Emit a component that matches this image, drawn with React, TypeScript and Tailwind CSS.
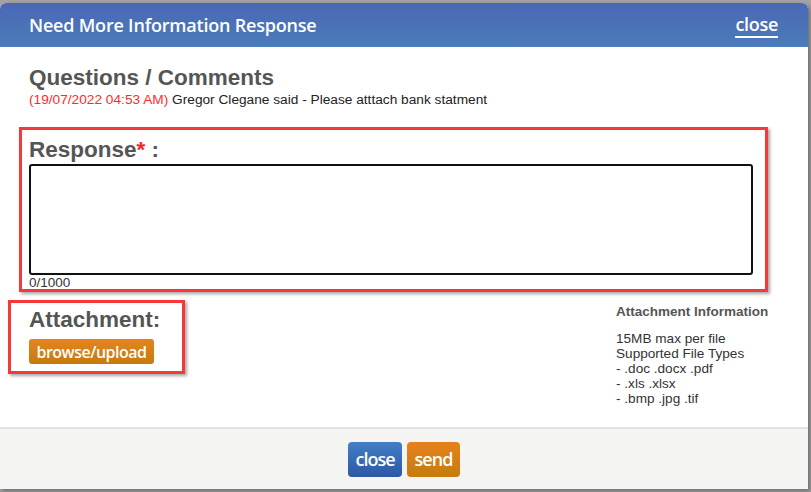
import React from "react";

export default function App() {
  const arial = { fontFamily: '"Liberation Sans", Arial, sans-serif' };
  const humanist = { fontFamily: '"Open Sans", "Noto Sans", sans-serif' };
  return (
    <div className="w-[811px] h-[492px] bg-[#a3a3a3] overflow-hidden pt-[3px]" style={arial}>
      <div className="w-[808px] h-[486px] bg-white rounded-t-[6px] flex flex-col shadow-[2px_2px_4px_rgba(0,0,0,0.35)]">
        {/* Header */}
        <div
          className="h-[44px] shrink-0 rounded-t-[6px] bg-gradient-to-b from-[#4b67b5] to-[#4a7cba] flex items-center justify-between pl-[29px] pr-[30px]"
          style={humanist}
        >
          <div className="text-white text-[18px] font-semibold tracking-[-0.2px] leading-none">
            Need More Information Response
          </div>
          <div className="text-white text-[18px] font-semibold leading-none tracking-[-0.3px] border-b-2 border-white pb-[3px] mt-[2px]">
            close
          </div>
        </div>

        {/* Body */}
        <div className="flex-1 pl-[29px] pt-[18px]">
          <div className="text-[22.5px] font-bold text-[#555] leading-[26px]">Questions / Comments</div>
          <div className="text-[13.7px] leading-[15px] mt-[1px] text-[#222]">
            <span className="text-[#ff2b2b]">(19/07/2022 04:53 AM)</span> Gregor Clegane said - Please atttach bank statment
          </div>

          {/* Response annotated box */}
          <div className="-ml-[10px] mt-[20px] w-[749px] h-[165px] border-[3px] border-[#f53838] shadow-[2px_2px_3px_rgba(0,0,0,0.35)] pl-[7px] pt-[6px]">
            <div className="text-[22.5px] font-bold text-[#555] leading-[27px]">
              Response<span className="text-[#ff1f1f]">*</span> :
            </div>
            <div className="w-[724px] h-[111px] border-2 border-[#111] rounded-[3px] mt-[1px]"></div>
            <div className="text-[13.5px] leading-[14px] text-[#333] mt-[1px]">0/1000</div>
          </div>

          {/* Attachment row */}
          <div className="flex -ml-[21px] mt-[8px]">
            <div className="w-[177px] h-[74px] border-[3px] border-[#f53838] shadow-[2px_2px_3px_rgba(0,0,0,0.35)] pl-[18px] pt-[4px] shrink-0">
              <div className="text-[22.5px] font-bold text-[#555] leading-[26px]">Attachment:</div>
              <div
                className="mt-[6px] w-[125px] h-[25px] rounded-[3px] bg-gradient-to-b from-[#e5841f] to-[#c67b0b] text-white text-[16px] font-semibold tracking-[-0.5px] flex items-center justify-center"
                style={humanist}
              >
                browse/upload
              </div>
            </div>
            <div className="ml-[431px] pt-[4px]">
              <div className="text-[13.5px] font-bold text-[#555] leading-[16px]">Attachment Information</div>
              <div className="text-[13.6px] text-[#333] leading-[15px] mt-[11px]">
                <div>15MB max per file</div>
                <div>Supported File Types</div>
                <div>- .doc .docx .pdf</div>
                <div>- .xls .xlsx</div>
                <div>- .bmp .jpg .tif</div>
              </div>
            </div>
          </div>
        </div>

        {/* Footer */}
        <div className="h-[62px] shrink-0 border-t-2 border-[#e3e3e1] bg-[#f4f4f2] flex items-center justify-center gap-[5px]" style={humanist}>
          <div className="w-[54px] h-[35px] rounded-[4px] bg-gradient-to-b from-[#427fc6] to-[#2c58a6] text-white text-[18px] font-semibold tracking-[-1px] flex items-center justify-center">
            close
          </div>
          <div className="w-[53px] h-[35px] rounded-[4px] bg-gradient-to-b from-[#e5821d] to-[#c57c0c] text-white text-[18px] font-semibold tracking-[-1px] flex items-center justify-center">
            send
          </div>
        </div>
      </div>
    </div>
  );
}
